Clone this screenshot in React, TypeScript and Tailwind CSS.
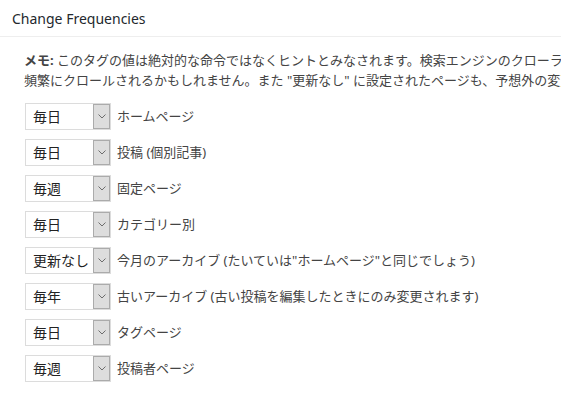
import React from 'react';

const rows: { value: string; label: string }[] = [
  { value: '毎日', label: 'ホームページ' },
  { value: '毎日', label: '投稿 (個別記事)' },
  { value: '毎週', label: '固定ページ' },
  { value: '毎日', label: 'カテゴリー別' },
  { value: '更新なし', label: '今月のアーカイブ (たいていは"ホームページ"と同じでしょう)' },
  { value: '毎年', label: '古いアーカイブ (古い投稿を編集したときにのみ変更されます)' },
  { value: '毎日', label: 'タグページ' },
  { value: '毎週', label: '投稿者ページ' },
];

function FakeSelect({ value }: { value: string }) {
  return (
    <div className="flex h-[27px] w-[86px] shrink-0 border border-[#dcdcdc] bg-white">
      <div className="flex flex-1 items-center pl-[7px] text-[14px] text-[#222]">{value}</div>
      <div className="flex w-[17px] items-center justify-center border border-[#ababab] bg-[#dddddd]">
        <svg width="8" height="5" viewBox="0 0 8 5" fill="none">
          <polyline points="0.5,0.5 4,4 7.5,0.5" stroke="#6d6d6d" strokeWidth="1" />
        </svg>
      </div>
    </div>
  );
}

export default function App() {
  return (
    <div
      className="h-[420px] w-[561px] overflow-hidden bg-white"
      style={{ fontFamily: '"Segoe UI", "Noto Sans", "Noto Sans CJK JP", sans-serif' }}
    >
      <div className="flex h-[37px] items-center border-b border-[#eeeeee] pl-3 text-[14px] text-[#23282d]">
        Change Frequencies
      </div>

      <div className="pl-6 pt-[13px] text-[13px] leading-[20px] text-[#444]">
        <p className="whitespace-nowrap">
          <b className="font-bold">メモ:</b> このタグの値は絶対的な命令ではなくヒントとみなされます。検索エンジンのクローラーはこの設定に従って判断しますが、
        </p>
        <p className="whitespace-nowrap">
          頻繁にクロールされるかもしれません。また "更新なし" に設定されたページも、予想外の変更を拾うために定期的にクロールされるかもしれません。
        </p>
      </div>

      <div className="mt-[13px] flex flex-col gap-[9px] pl-[25px]">
        {rows.map((r, i) => (
          <div key={i} className="flex items-center gap-[6px]">
            <FakeSelect value={r.value} />
            <span className="whitespace-nowrap text-[13px] text-[#444]">{r.label}</span>
          </div>
        ))}
      </div>
    </div>
  );
}
